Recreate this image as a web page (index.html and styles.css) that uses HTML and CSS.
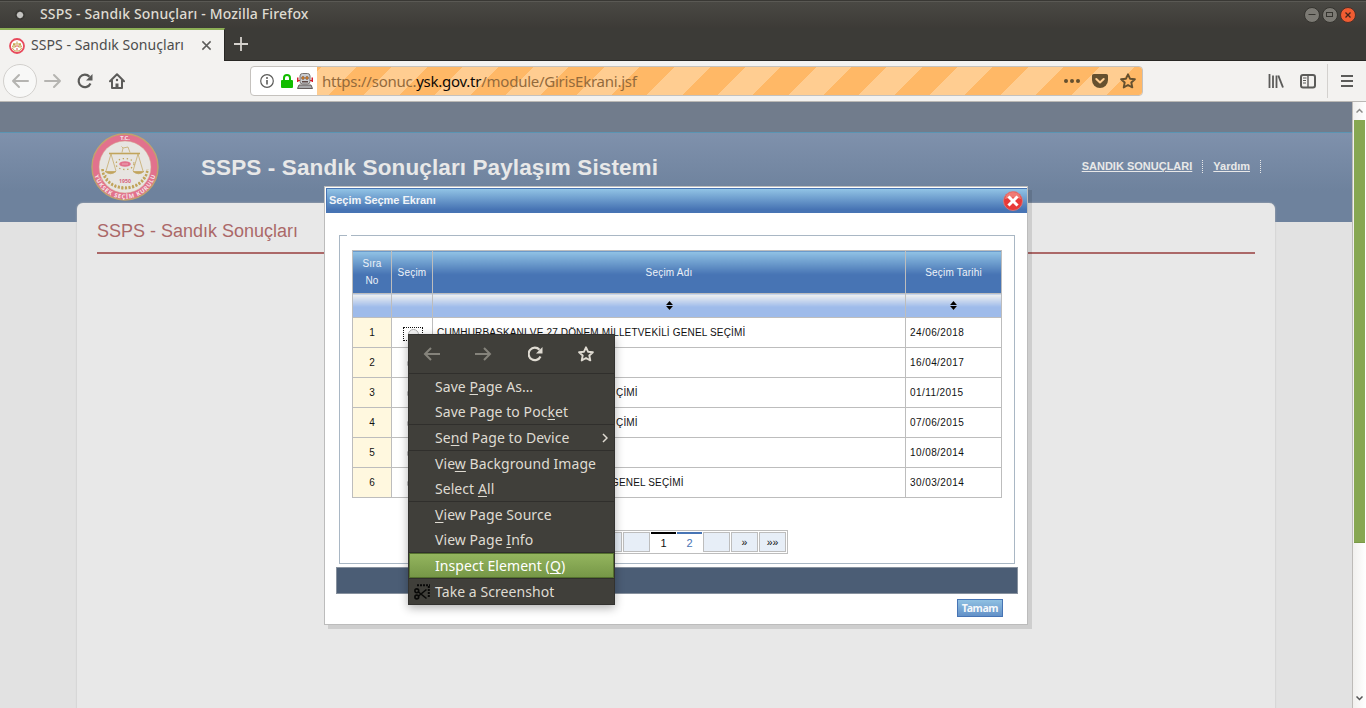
FILE: index.html
```html
<!DOCTYPE html>
<html lang="tr">
<head>
<meta charset="utf-8">
<title>SSPS - Sandık Sonuçları</title>
<link rel="stylesheet" href="styles.css">
</head>
<body>
<div class="window">
  <header class="titlebar">
    <span class="app-dot"></span>
    <span class="window-title">SSPS - Sandık Sonuçları - Mozilla Firefox</span>
    <div class="window-buttons">
      <svg class="wbtn" viewBox="0 0 16 16"><circle cx="8" cy="8" r="7.5" fill="#7c7a74" stroke="#35342f"/><path d="M4.500 7.500h7" stroke="#35342f" fill="none"/></svg>
      <svg class="wbtn" viewBox="0 0 16 16"><circle cx="8" cy="8" r="7.5" fill="#7c7a74" stroke="#35342f"/><rect x="4.500" y="5.500" width="6" height="4" stroke="#35342f" fill="none"/></svg>
      <svg class="wbtn" viewBox="0 0 16 16"><circle cx="8" cy="8" r="7.5" fill="#f05c32" stroke="#4a3029"/><path d="M5.500 5.500l5 5M10.500 5.500l-5 5" stroke="#40241c" stroke-width="1.300" fill="none"/></svg>
    </div>
  </header>

  <div class="tabs">
    <div class="tab">
      <svg class="favicon" viewBox="0 0 16 16"><circle cx="8" cy="8" r="7" fill="#fff" stroke="#e84a5c" stroke-width="1.8"/><path d="M4 6h8M5 5.5L3.5 9h3zM11 5.5L9.500 9h3zM8 3.500v2M3.500 10c1 4 8 4 9 0" stroke="#c5a34c" fill="none"/><path d="M6.500 8h3M7 11h2" stroke="#e05060"/></svg>
      <span class="tab-title">SSPS - Sandık Sonuçları</span>
      <svg class="tab-close" viewBox="0 0 12 12"><path d="M1.500 1.500l9 9M10.500 1.500l-9 9" stroke="#5c5c5a" stroke-width="1.6"/></svg>
    </div>
    <svg class="new-tab" viewBox="0 0 14 14"><path d="M7 0v14M0 7h14" stroke="#d5d2cd" stroke-width="1.800"/></svg>
  </div>

  <nav class="toolbar">
    <div class="back"><svg width="18" height="16" viewBox="0 0 18 16"><path d="M17 8H2M8 2L2 8l6 6" stroke="#b5b4b1" stroke-width="2" fill="none" stroke-linecap="round" stroke-linejoin="round"/></svg></div>
    <svg class="forward" width="18" height="16" viewBox="0 0 18 16"><path d="M1 8h15M10 2l6 6-6 6" stroke="#b5b4b1" stroke-width="2" fill="none" stroke-linecap="round" stroke-linejoin="round"/></svg>
    <svg class="reload" width="16" height="16" viewBox="0 0 16 16"><path d="M13.500 10.500A6.200 6.200 0 1 1 12.500 3.800" stroke="#5b5b59" stroke-width="2.200" fill="none"/><path d="M15.500 1v6.500H9z" fill="#5b5b59"/></svg>
    <svg class="home" width="16" height="16" viewBox="0 0 16 16"><path d="M1 8.200L8 1.200l7 7M3 7.500V15h10V7.500" stroke="#5b5b59" stroke-width="2" fill="none" stroke-linejoin="round" stroke-linecap="round"/><path d="M6.500 15v-4.500h3V15z" fill="#5b5b59"/><circle cx="8" cy="7" r="1.200" fill="#5b5b59"/></svg>

    <div class="urlbar">
      <div class="identity">
        <svg width="14" height="14" viewBox="0 0 14 14"><circle cx="7" cy="7" r="6.300" stroke="#5b5b59" stroke-width="1.200" fill="none"/><path d="M7 6v4.500" stroke="#5b5b59" stroke-width="1.600"/><circle cx="7" cy="4" r="1" fill="#5b5b59"/></svg>
        <svg class="lock" width="12" height="14" viewBox="0 0 12 14"><rect y="6" width="12" height="8" rx="1" fill="#12bc00"/><path d="M3 7V4a3 3 0 0 1 6 0v3" stroke="#12bc00" stroke-width="2" fill="none"/></svg>
        <svg width="16" height="16" viewBox="0 0 16 16"><rect x="3" y=".5" width="10" height="10.500" rx="2.500" fill="#c9ccd0" stroke="#77716f"/><path d="M0 4.500h1.500V9H0zM14.500 4.500H16V9h-1.500z" fill="#d3202f"/><path d="M1 7.500h2M13 7.500h2" stroke="#d3202f"/><circle cx="6" cy="5" r="1.400" fill="#ef8d20" stroke="#5a403a" stroke-width=".6"/><circle cx="10" cy="5" r="1.400" fill="#ef8d20" stroke="#5a403a" stroke-width=".6"/><path d="M5 8h6v1.500H5z" fill="#5e4946"/><path d="M2 12h12l1.500 3.500H.5z" fill="#a9a9ab" stroke="#625b5b"/></svg>
      </div>
      <div class="address">
        <span class="url">https://sonuc.<b>ysk.gov.tr</b>/module/GirisEkrani.jsf</span>
        <div class="page-actions">
          <svg width="16" height="16" viewBox="0 0 16 16" fill="#65502f"><circle cx="2" cy="8" r="2"/><circle cx="8" cy="8" r="2"/><circle cx="14" cy="8" r="2"/></svg>
          <svg width="16" height="16" viewBox="0 0 16 16"><path d="M1.800 1h12.400C15.300 1 16 1.700 16 2.800V7a8 8 0 0 1-16 0V2.800C0 1.700.7 1 1.800 1z" fill="#65502f"/><path d="M4.300 6L8 9.500 11.700 6" stroke="#ffcd91" stroke-width="2" fill="none" stroke-linecap="round" stroke-linejoin="round"/></svg>
          <svg width="16" height="16" viewBox="0 0 16 16"><path d="M8 1.300l2 4.400 4.900.5-3.600 3.300 1 4.900L8 12l-4.300 2.400 1-4.900L1.100 6.200 6 5.700z" stroke="#65502f" stroke-width="1.900" fill="none" stroke-linejoin="round"/></svg>
        </div>
      </div>
    </div>

    <svg class="library" width="16" height="16" viewBox="0 0 16 16"><path d="M1.500 1v14M5 2.500V15M8.500 2.500V15" stroke="#5b5b59" stroke-width="1.800"/><path d="M10.300 2.500L15 14.500" stroke="#5b5b59" stroke-width="1.900"/></svg>
    <svg class="sidebar-icon" width="16" height="16" viewBox="0 0 16 16"><rect x="1" y="2" width="14" height="12.500" rx="2" stroke="#5b5b59" stroke-width="2" fill="none"/><path d="M8 2v12" stroke="#5b5b59" stroke-width="1.400"/><path d="M3 5h3.500M3 7.500h3M3 10h3" stroke="#5b5b59"/></svg>
    <span class="divider"></span>
    <svg class="menu-icon" width="12" height="14" viewBox="0 0 12 14"><path d="M0 2h12M0 7h12M0 12h12" stroke="#5b5b59" stroke-width="2"/></svg>
  </nav>

  <div class="viewport">
    <main class="page">
      <div class="top-strip"></div>
      <div class="banner">
        <svg class="emblem" viewBox="0 0 68 68">
          <defs><path id="arc" d="M2.300 34a31.700 31.700 0 0 0 63.400 0"/></defs>
          <circle cx="34" cy="34" r="33" fill="#e2718d" stroke="#c3a26d" stroke-width="1.400"/>
          <circle cx="34" cy="34" r="26" fill="#e7e5e1" stroke="#d7a58b" stroke-width=".5"/>
          <text x="34" y="7.300" text-anchor="middle" class="emblem-text">T.C.</text>
          <text class="emblem-text"><textPath href="#arc" startOffset="50%" text-anchor="middle" textLength="82">YÜKSEK SEÇİM KURULU</textPath></text>
          <g stroke="#c1a45b" fill="none"><path d="M18 20.500h31" stroke-width="1.600"/><path d="M31 19.500l1-4.500 5-1 2 5.500M32 15l-1.500-1.500M20 21l-5 17M20 21l5 17M47 21l-5 17M47 21l5 17" stroke-width=".7"/><path d="M14 38.500h11q-5.500 4.500-11 0zM42 38.500h11q-5.500 4.500-11 0z" fill="#c1a45b" stroke-width=".7"/>
          <path d="M11.500 36c2 25.500 43 25.500 45 0" stroke-width="2.600" stroke-dasharray="2.200 1.400"/><path d="M14.500 42c5 16 34 16 39 0" stroke-width="1.600" stroke-dasharray="1.500 2"/>
          <ellipse cx="34" cy="31" rx="9" ry="5.500" stroke-width="1.300" stroke-dasharray="1.300 2.700"/></g>
          <ellipse cx="34" cy="31" rx="5.800" ry="2.800" fill="#e2718d"/><path d="M31 31h6" stroke="#f0b9c2" stroke-width=".8"/>
          <text x="34" y="49.600" text-anchor="middle" class="emblem-year">1950</text>
        </svg>
        <h1 class="site-title">SSPS - Sandık Sonuçları Paylaşım Sistemi</h1>
        <div class="top-links"><a>SANDIK SONUÇLARI</a><a class="help">Yardım</a></div>
      </div>
      <section class="panel"><h2 class="panel-title">SSPS - Sandık Sonuçları</h2></section>

      <div class="dialog">
        <div class="dialog-head">
          <span>Seçim Seçme Ekranı</span>
          <svg width="20" height="20" viewBox="0 0 20 20"><circle cx="10" cy="10" r="9.500" fill="#e93a38" stroke="#d9807f" stroke-width=".8"/><path d="M2 8a8 7 0 0 1 16 0q-8-3-16 0z" fill="#f07a74"/><path d="M6.500 6.500l7 7M13.500 6.500l-7 7" stroke="#fff" stroke-width="3" stroke-linecap="square"/></svg>
        </div>
        <div class="frame">
          <span class="frame-gap"></span>
          <table class="grid">
            <colgroup><col class="c1"><col class="c2"><col class="c3"><col class="c4"></colgroup>
            <tr class="heads"><th>Sıra No</th><th>Seçim</th><th>Seçim Adı</th><th>Seçim Tarihi</th></tr>
            <tr class="sorts"><td></td><td></td><td><svg width="7" height="9" viewBox="0 0 7 9"><path d="M0 4l3.500-4L7 4zM0 5h7L3.500 9z"/></svg></td><td><svg width="7" height="9" viewBox="0 0 7 9"><path d="M0 4l3.500-4L7 4zM0 5h7L3.500 9z"/></svg></td></tr>
            <tr><td class="no">1</td><td class="pick"><span class="focus"><i class="radio"></i></span></td><td>CUMHURBAŞKANI VE 27.DÖNEM MİLLETVEKİLİ GENEL SEÇİMİ</td><td class="date">24/06/2018</td></tr>
            <tr><td class="no">2</td><td class="pick"><i class="radio"></i></td><td></td><td class="date">16/04/2017</td></tr>
            <tr><td class="no">3</td><td class="pick"><i class="radio"></i></td><td class="cut3">ÇİMİ</td><td class="date">01/11/2015</td></tr>
            <tr><td class="no">4</td><td class="pick"><i class="radio"></i></td><td class="cut3">ÇİMİ</td><td class="date">07/06/2015</td></tr>
            <tr><td class="no">5</td><td class="pick"><i class="radio"></i></td><td></td><td class="date">10/08/2014</td></tr>
            <tr><td class="no">6</td><td class="pick"><i class="radio"></i></td><td class="cut6">GENEL SEÇİMİ</td><td class="date">30/03/2014</td></tr>
          </table>
          <div class="pager"><span class="pg"></span><span class="pg"></span><span class="pg"></span><span class="num current">1</span><span class="num">2</span><span class="pg"></span><span class="pg">»</span><span class="pg">»»</span></div>
        </div>
        <div class="dark-bar"></div>
        <div class="actions"><button class="ok">Tamam</button></div>
      </div>
    </main>
    <div class="scrollbar">
      <svg width="7" height="5" viewBox="0 0 7 5"><path d="M.5 4.500l3-3 3 3" stroke="#8a8a88" stroke-width="1.500" fill="none"/></svg>
      <div class="thumb"></div>
      <svg class="down" width="7" height="5" viewBox="0 0 7 5"><path d="M.5.500l3 3 3-3" stroke="#555" stroke-width="1.500" fill="none"/></svg>
    </div>
  </div>

  <div class="context-menu">
    <div class="menu-icons">
      <svg width="18" height="16" viewBox="0 0 18 16"><path d="M17 8H2M8 2L2 8l6 6" stroke="#85837b" stroke-width="2" fill="none"/></svg>
      <svg width="18" height="16" viewBox="0 0 18 16"><path d="M0 8h15M9 2l6 6-6 6" stroke="#85837b" stroke-width="2" fill="none"/></svg>
      <svg width="16" height="16" viewBox="0 0 16 16"><path d="M12.500 10.500A6.200 6.200 0 1 1 11.500 3.800" stroke="#dfdbd2" stroke-width="2.200" fill="none"/><path d="M14.500 1v6.500H8z" fill="#dfdbd2"/></svg>
      <svg width="16" height="16" viewBox="0 0 16 16"><path d="M8 1.300l2 4.400 4.900.5-3.600 3.300 1 4.900L8 12l-4.300 2.400 1-4.900L1.100 6.200 6 5.700z" stroke="#dfdbd2" stroke-width="1.900" fill="none" stroke-linejoin="round"/></svg>
    </div>
    <div class="group"><div class="item">Save <u>P</u>age As…</div><div class="item">Save Page to Poc<u>k</u>et</div></div>
    <div class="group"><div class="item">Se<u>n</u>d Page to Device<svg class="chevron" width="6" height="10" viewBox="0 0 6 10"><path d="M1 1l4 4-4 4" stroke="#dfdbd2" stroke-width="1.500" fill="none"/></svg></div></div>
    <div class="group"><div class="item">Vie<u>w</u> Background Image</div><div class="item">Select <u>A</u>ll</div></div>
    <div class="group"><div class="item"><u>V</u>iew Page Source</div><div class="item">View Page <u>I</u>nfo</div></div>
    <div class="group"><div class="item active">Inspect Element (<u>Q</u>)</div></div>
    <div class="group"><div class="item"><svg class="shot" width="16" height="16" viewBox="0 0 16 16"><path d="M3 1.200h13M14.800 2v11" stroke="#090908" stroke-width="2" stroke-dasharray="2 1" fill="none"/><g stroke="#090908" stroke-width="1.600" fill="none"><circle cx="2.800" cy="6.800" r="1.900"/><circle cx="2.800" cy="13" r="1.900"/><path d="M4.500 8L12.500 14.500M4.500 12L12.500 5.500"/></g></svg>Take a Screenshot</div></div>
  </div>
</div>
</body>
</html>
```
FILE: styles.css
```css
* { box-sizing: border-box; }
body { margin: 0; overflow: hidden; font-family: "Liberation Sans", sans-serif; }
.window { position: relative; width: 1366px; height: 708px; display: flex; flex-direction: column; overflow: hidden; }
svg { display: block; flex: none; }

.titlebar { height: 28px; flex: none; display: flex; align-items: center; background: linear-gradient(#4a4944, #3d3b37); border-top: 1px solid #393834; box-shadow: inset 0 1px #5a5954; padding: 0 10px 0 14px; color: #dfdbd2; font: 500 14px "Noto Sans", sans-serif; }
.app-dot { width: 12px; height: 12px; border-radius: 50%; background: radial-gradient(circle, #c4c3c0 0 2.6px, #34332f 3.8px, #45443f 6px); }
.window-title { margin-left: 14px; padding-bottom: 2px; letter-spacing: .15px; white-space: nowrap; }
.window-buttons { margin-left: auto; display: flex; gap: 2px; }
.wbtn { width: 16px; height: 16px; }

.tabs { height: 33px; flex: none; display: flex; align-items: center; background: #3c3b37; border-bottom: 1px solid #282724; }
.tab { width: 225px; height: 33px; margin-bottom: -1px; display: flex; align-items: center; padding-left: 9px; background: #f3f2f0; border-top: 2px solid #8daf56; border-right: 1px solid #282724; }
.favicon { width: 16px; height: 16px; }
.tab-title { width: 154px; margin: -2px 16px 0 6px; white-space: nowrap; color: #4c4c4c; font: 14px "Noto Sans", sans-serif; letter-spacing: .05px; }
.tab-close { width: 11px; height: 11px; }
.new-tab { width: 14px; height: 14px; margin-left: 9px; }

.toolbar { height: 41px; flex: none; display: flex; align-items: center; padding-left: 3px; background: #f3f2f0; border-bottom: 1px solid #bab8b5; }
.back { width: 34px; height: 34px; border: 1px solid #d2d0cd; border-radius: 50%; background: #f8f8f7; display: grid; place-items: center; }
.forward { margin-left: 7px; }
.reload { margin-left: 15px; }
.home { margin-left: 16px; }
.urlbar { width: 893px; height: 30px; margin-left: 125px; display: flex; background: #fff; border: 1px solid #c5c2be; border-radius: 4px; overflow: hidden; }
.identity { width: 66px; padding: 0 4px 0 9px; display: flex; justify-content: space-between; align-items: center; }
.lock { margin-left: 2px; }
.address { flex: 1; display: flex; align-items: center; justify-content: space-between; padding: 0 6px 0 5px; background: repeating-linear-gradient(135deg, #ffb866 0 3px, #ffcd91 3px 28px, #ffb866 28px 50px); }
.url { color: #936a3c; font: 15px "Noto Sans", sans-serif; white-space: nowrap; letter-spacing: -.25px; }
.url b { color: #0c0905; font-weight: 400; }
.page-actions { display: flex; gap: 12px; }
.library { margin-left: 125px; }
.sidebar-icon { margin-left: 16px; }
.divider { width: 1px; height: 34px; margin-left: 11px; background: #d3d1ce; }
.menu-icon { margin-left: 13px; }

.viewport { flex: 1; display: flex; min-height: 0; }
.page { position: relative; width: 1352px; background: #e2e2e2; }
.top-strip { height: 30px; background: #717c8c; }
.banner { height: 90px; display: flex; align-items: flex-start; border-top: 1px solid #5b94b2; background: linear-gradient(#7f91ac, #6e829d 65%); padding-left: 91px; }
.emblem { width: 68px; height: 68px; }
.emblem-text { fill: #f5e8e8; font: bold 5.8px "Noto Sans", sans-serif; }
.emblem-year { fill: #d7637d; font: bold 5.2px "Noto Sans", sans-serif; }
.site-title { margin: 21px 0 0 42px; color: #e8e8e8; font: bold 22.5px/28px "Liberation Sans", sans-serif; letter-spacing: .11px; white-space: nowrap; }
.top-links { margin: 27px 91px 0 auto; display: flex; font: bold 11px/13px "Liberation Sans", sans-serif; color: #e8e8e8; }
.top-links a { padding-right: 10px; border-right: 1px dotted #e8e8e8; text-decoration: underline; white-space: nowrap; }
.top-links .help { padding-left: 10px; }
.panel { width: 1198px; height: 540px; margin: -19px 0 0 77px; padding: 16px 20px; background: #e8e8e8; border-radius: 6px 6px 0 0; box-shadow: 0 0 2px #bbb; position: relative; }
.panel-title { margin: 0; height: 35px; border-bottom: 2px solid #ab6868; color: #ab6868; font: 18px/25px "Liberation Sans", sans-serif; }

.dialog { position: absolute; left: 324px; top: 84px; width: 704px; height: 439px; padding: 1px 0 0 1px; background: #fff; border: 1px solid #bcbcbc; box-shadow: 4px 4px rgba(0,0,0,.11); }
.dialog-head { height: 25px; padding: 0 4px 0 2px; display: flex; align-items: center; justify-content: space-between; border-top: 1px solid #4774b4; border-left: 1px solid #4774b4; background: linear-gradient(#91c3e5, #4774b4 85%); color: #f1f4f8; font: bold 11px "Liberation Sans", sans-serif; letter-spacing: -.05px; }
.dialog-head span { padding-bottom: 2px; }
.frame { position: relative; width: 676px; height: 329px; margin: 22px 0 0 13px; padding: 14px 12px; border: 1px solid #a9b7c4; }
.frame-gap { position: absolute; top: -1px; left: 7px; width: 4px; height: 1px; background: #fff; }
.grid { width: 650px; table-layout: fixed; border-collapse: collapse; font: 10px/17px "Liberation Sans", sans-serif; letter-spacing: .16px; color: #111; }
.c1 { width: 39px; } .c2 { width: 41px; } .c3 { width: 473px; } .c4 { width: 96px; }
.grid td, .grid th { height: 30px; padding: 0 4px; border: 1px solid #bdbdbd; white-space: nowrap; }
.grid .date { letter-spacing: .42px; }
.grid .heads th { height: 43px; white-space: normal; font-weight: 400; color: #edf2f8; letter-spacing: .2px; background: linear-gradient(#91c3e5, #4774b4 55%); }
.grid .sorts td { height: 24px; background: linear-gradient(#f1f1f1, #9ebbea 55%); }
.sorts svg { margin: 0 auto; filter: drop-shadow(0 0 .5px #fff); }
.grid .no { text-align: center; background: #fff8df; }
.grid .pick { padding: 0; }
.focus { display: block; width: 20px; height: 14px; margin: 2px 0 0 11px; border: 1px dotted #111; }
.radio { display: block; width: 11px; height: 11px; margin: 1px auto 0; border: 1px solid #b2b2b2; border-radius: 50%; background: #f4f4f4; }
.grid .cut3 { padding-left: 183px; }
.grid .cut6 { padding-left: 178px; }
.pager { width: 223px; height: 24px; margin: 32px 0 0 213px; padding: 1px; display: flex; gap: 1px; border: 1px solid #bdbdbd; font: 10.5px/18px "Liberation Sans", sans-serif; color: #111; text-align: center; }
.pg { width: 27px; border: 1px solid #bdbdbd; background: #e7eef7; }
.num { width: 25px; border-top: 2px solid #4774b4; color: #4774b4; font-size: 11px; }
.current { color: #111; border-color: #000; }
.dark-bar { width: 682px; height: 27px; margin: 3px 0 0 10px; background: #4b5d75; border: 1px solid #87919e; }
.actions { display: flex; justify-content: flex-end; padding: 5px 24px 0 0; }
.ok { width: 46px; height: 18px; padding: 0; border: 1px solid #4774b4; background: linear-gradient(#8fc0e2, #6391c8); color: #f5f8fb; font: bold 10.5px/14px "Noto Sans", sans-serif; letter-spacing: -.4px; }

.scrollbar { width: 14px; display: flex; flex-direction: column; align-items: center; padding: 6px 1px 0; border-left: 1px solid #bdbbb8; background: linear-gradient(90deg, #f1f0ee, #fff); }
.thumb { width: 100%; height: 423px; margin-top: 7px; background: #87a752; border-bottom: 1px solid #799947; }
.down { margin: auto 0 7px; }

.context-menu { position: absolute; left: 408px; top: 334px; width: 207px; height: 271px; border: 1px solid #33322f; background: #403f3a; box-shadow: 0 3px 9px rgba(0,0,0,.3); color: #dfdbd2; font: 14px/25px "Noto Sans", sans-serif; }
.menu-icons { height: 38px; display: flex; justify-content: space-between; align-items: center; padding: 0 20px 0 14px; }
.group { border-top: 1px solid #302f2c; }
.item { position: relative; height: 25px; padding-left: 26px; white-space: nowrap; letter-spacing: .06px; }
.item u { text-underline-offset: 2px; text-decoration-thickness: 1px; }
.active { color: #fff; background: linear-gradient(#94b55e, #769747); border: 1px solid #54702e; line-height: 23px; padding-left: 25px; }
.chevron { position: absolute; right: 6px; top: 8px; }
.shot { position: absolute; left: 5px; top: 5px; }
```
